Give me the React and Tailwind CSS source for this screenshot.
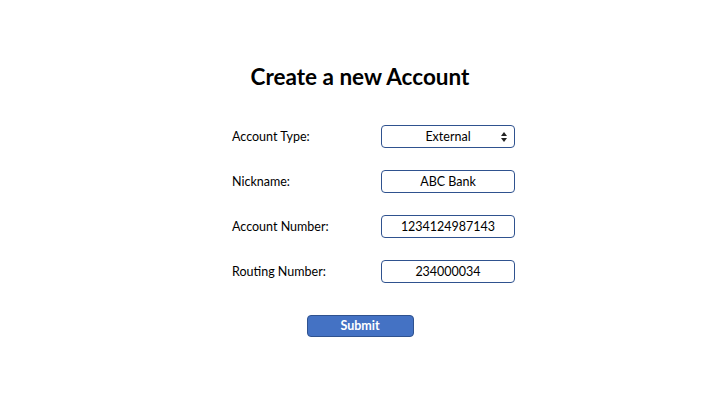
const fields = [
    { label: 'Nickname:', value: 'ABC Bank' },
    { label: 'Account Number:', value: '1234124987143' },
    { label: 'Routing Number:', value: '234000034' },
];

const App = () => {
    return (
        <div className="w-[720px] h-[405px] bg-white flex flex-col items-center font-['Lato','Liberation_Sans',sans-serif] text-black">
            {/* Title */}
            <h1 className="mt-[63px] text-[22.5px] leading-[28px] font-bold">Create a new Account</h1>

            {/* Form rows */}
            <div className="mt-[34px] ml-[27px] w-[283px] flex flex-col gap-[22px]">
                <div className="flex items-center justify-between h-[23px]">
                    <span className="text-[12.5px] pt-[2px]">Account Type:</span>
                    <div className="relative w-[134px] h-[23px] rounded-[4px] border border-[#2f528f] flex items-center justify-center text-[12.5px] pt-[1px]">
                        External
                        <svg className="absolute right-[7px] top-[6px]" width="6" height="10" viewBox="0 0 6 10">
                            <path d="M3 0 L6 4 L0 4 Z" fill="#222" />
                            <path d="M0 6 L6 6 L3 10 Z" fill="#222" />
                        </svg>
                    </div>
                </div>
                {fields.map((f) => (
                    <div key={f.label} className="flex items-center justify-between h-[23px]">
                        <span className="text-[12.5px] pt-[2px]">{f.label}</span>
                        <div className="w-[134px] h-[23px] rounded-[4px] border border-[#2f528f] flex items-center justify-center text-[12.5px] pt-[1px]">
                            {f.value}
                        </div>
                    </div>
                ))}
            </div>

            {/* Submit */}
            <button className="mt-[32px] w-[107px] h-[22px] rounded-[4px] bg-[#4472c4] border border-[#2f528f] text-white text-[12.5px] font-bold leading-none pt-[1px]">
                Submit
            </button>
        </div>
    );
};

export default App;
